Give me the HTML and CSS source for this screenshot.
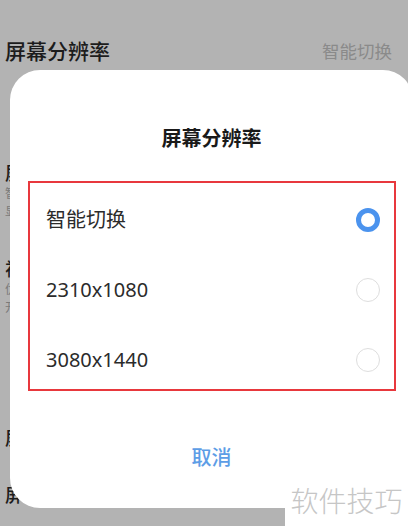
FILE: index.html
```html
<!DOCTYPE html>
<html lang="zh-CN">
<head>
    <meta charset="UTF-8">
    <meta name="viewport" content="width=device-width, initial-scale=1.0">
    <title>屏幕分辨率</title>
    <link rel="stylesheet" href="styles.css">
</head>
<body>
    <div class="settings">
        <div class="head-row">
            <span class="head-title">屏幕分辨率</span>
            <span class="head-value">智能切换</span>
        </div>
        <div class="setting-list">
            <div class="setting-item">
                <div class="item-title">屏幕</div>
                <div class="item-sub">智能</div>
                <div class="item-sub">显示</div>
            </div>
            <div class="setting-item gap-sm">
                <div class="item-title">视频</div>
                <div class="item-sub">优化</div>
                <div class="item-sub">开启</div>
            </div>
            <div class="setting-item gap-lg">
                <div class="item-title">屏幕色彩</div>
            </div>
            <div class="setting-item gap-md">
                <div class="item-title">屏幕色温</div>
            </div>
        </div>
    </div>

    <!-- dialog sits over the settings page -->
    <div class="dialog">
        <h2 class="dialog-title">屏幕分辨率</h2>
        <div class="option-box">
            <div class="option">
                <span class="option-label">智能切换</span>
                <span class="radio checked"></span>
            </div>
            <div class="option">
                <span class="option-label">2310x1080</span>
                <span class="radio"></span>
            </div>
            <div class="option last">
                <span class="option-label">3080x1440</span>
                <span class="radio"></span>
            </div>
        </div>
        <div class="cancel">取消</div>
    </div>

    <div class="watermark">软件技巧</div>
</body>
</html>
```

FILE: styles.css
```css
body {
    margin: 0;
    width: 408px;
    height: 526px;
    overflow: hidden;
    position: relative;
    background: #b3b3b3;
    font-family: 'Noto Sans', 'Noto Sans CJK SC', sans-serif;
}

.settings {
    padding: 0 16px 0 5px;
}

.head-row {
    height: 100px;
    display: flex;
    justify-content: space-between;
    align-items: center;
}

.head-title {
    font-family: 'Noto Sans CJK SC', sans-serif;
    font-size: 21px;
    font-weight: 500;
    color: #1c1c1c;
}

.head-value {
    font-family: 'Noto Sans CJK SC', sans-serif;
    font-size: 17.5px;
    color: #8a8a8a;
}

.setting-list {
    padding-top: 60px;
    display: flex;
    flex-direction: column;
}

.setting-item.gap-sm {
    margin-top: 36px;
}

.setting-item.gap-lg {
    margin-top: 109px;
}

.setting-item.gap-md {
    margin-top: 33px;
}

.item-title {
    font-family: 'Noto Sans CJK SC', sans-serif;
    font-size: 18px;
    font-weight: 500;
    line-height: 24px;
    color: #1c1c1c;
}

.item-sub {
    font-family: 'Noto Sans CJK SC', sans-serif;
    font-size: 12px;
    line-height: 18px;
    color: #7a7a7a;
}

.dialog {
    position: absolute;
    left: 10px;
    top: 70px;
    width: 403px;
    height: 438px;
    box-sizing: border-box;
    background: #ffffff;
    border-radius: 30px;
    padding: 54px 0 0;
    display: flex;
    flex-direction: column;
    align-items: center;
}

.dialog-title {
    margin: 0;
    font-family: 'Noto Sans CJK SC', sans-serif;
    font-size: 20px;
    font-weight: bold;
    line-height: 28px;
    color: #1a1a1a;
}

.option-box {
    margin-top: 29px;
    width: 368px;
    align-self: flex-start;
    margin-left: 18px;
    box-sizing: border-box;
    border: 2px solid #e8383d;
    padding: 2px 14px 0 16px;
    display: flex;
    flex-direction: column;
}

.option {
    height: 70px;
    display: flex;
    justify-content: space-between;
    align-items: flex-start;
    padding-top: 23px;
    box-sizing: border-box;
}

.option.last {
    height: 64px;
}

.option-label {
    font-family: 'Noto Sans', 'Noto Sans CJK SC', sans-serif;
    font-size: 20px;
    line-height: 24px;
    color: #2b2b2b;
}

.radio {
    width: 24px;
    height: 24px;
    box-sizing: border-box;
    border-radius: 50%;
    border: 1.5px solid #dedede;
}

.radio.checked {
    border: 5px solid #4b93ee;
}

.cancel {
    margin-top: 52px;
    font-family: 'Noto Sans CJK SC', sans-serif;
    font-size: 20px;
    font-weight: 500;
    line-height: 28px;
    color: #5d9de6;
}

.watermark {
    position: absolute;
    right: 0;
    bottom: 0;
    width: 123px;
    height: 54px;
    background: #ffffff;
    display: flex;
    align-items: center;
    justify-content: center;
    padding-top: 2px;
    box-sizing: border-box;
    font-family: 'Noto Sans CJK SC', sans-serif;
    font-size: 28px;
    font-weight: 300;
    color: #c6c6c6;
}
```
